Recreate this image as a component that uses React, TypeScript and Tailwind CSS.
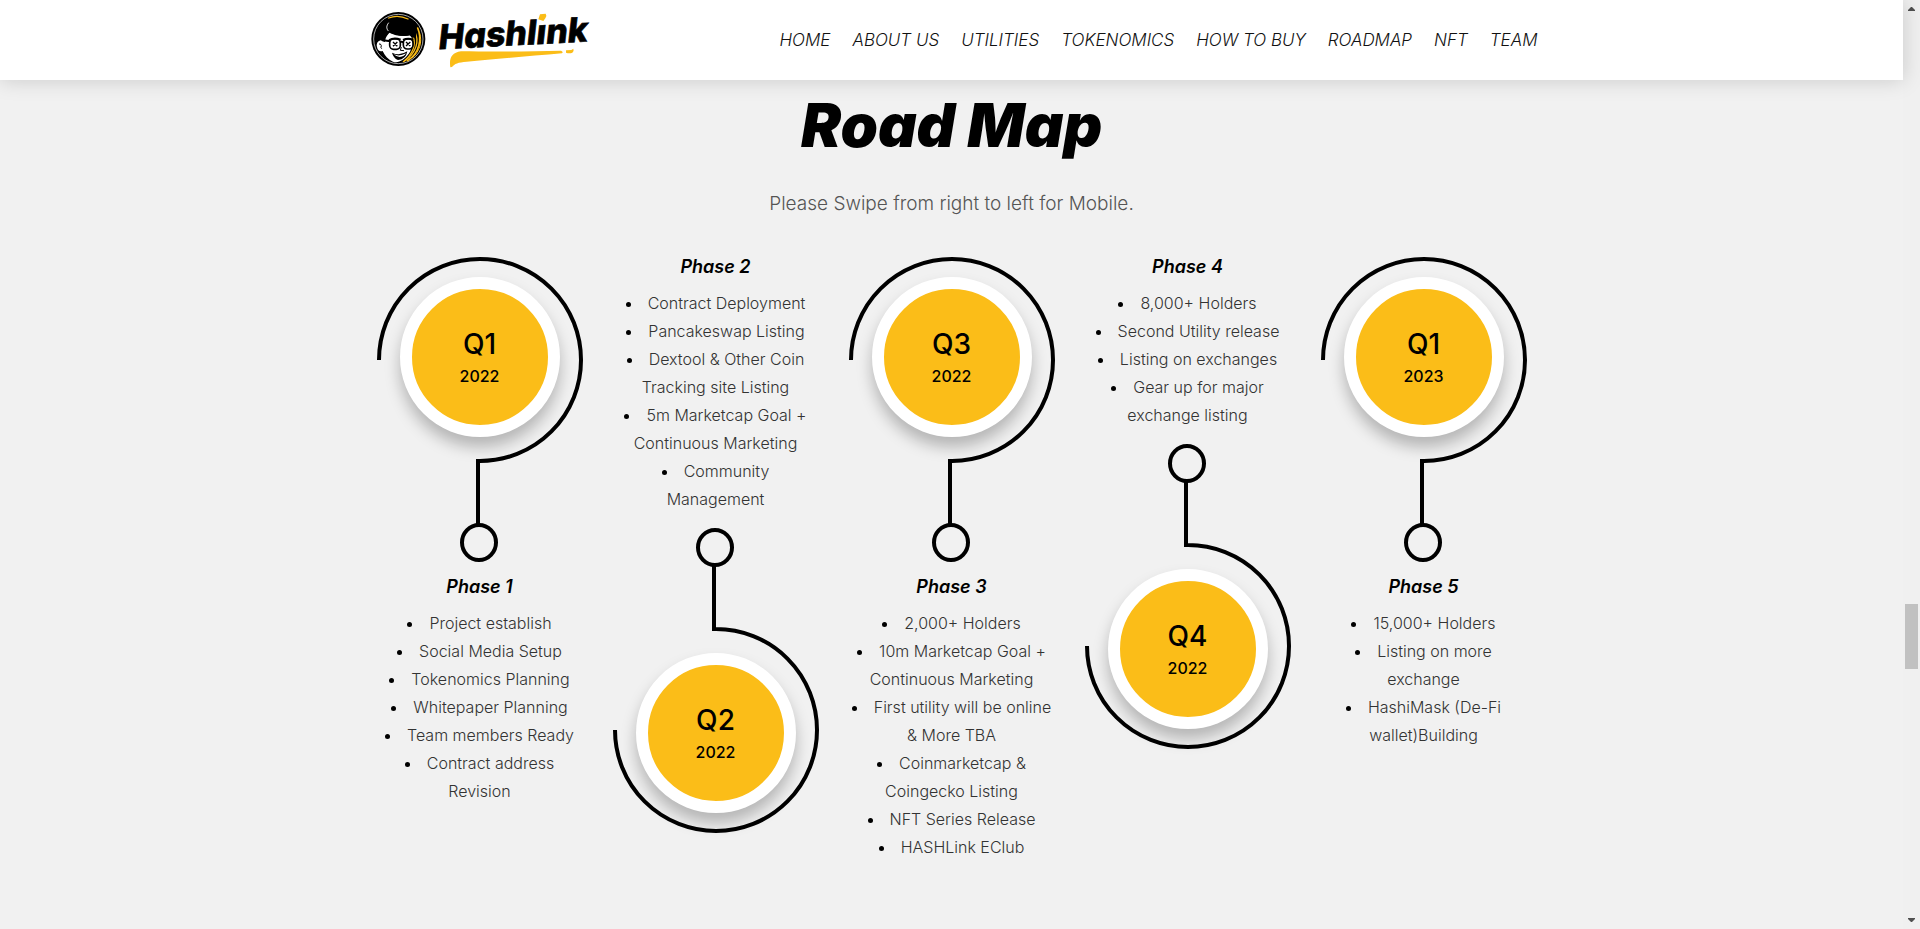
import React from "react";

type Phase = {
  title: string;
  quarter: string;
  year: string;
  items: string[][];
};

const navLinks = ["Home", "About us", "Utilities", "Tokenomics", "How to buy", "Roadmap", "NFT", "Team"];

const phases: Phase[] = [
  {
    title: "Phase 1",
    quarter: "Q1",
    year: "2022",
    items: [
      ["Project establish"],
      ["Social Media Setup"],
      ["Tokenomics Planning"],
      ["Whitepaper Planning"],
      ["Team members Ready"],
      ["Contract address", "Revision"],
    ],
  },
  {
    title: "Phase 2",
    quarter: "Q2",
    year: "2022",
    items: [
      ["Contract Deployment"],
      ["Pancakeswap Listing"],
      ["Dextool & Other Coin", "Tracking site Listing"],
      ["5m Marketcap Goal +", "Continuous Marketing"],
      ["Community", "Management"],
    ],
  },
  {
    title: "Phase 3",
    quarter: "Q3",
    year: "2022",
    items: [
      ["2,000+ Holders"],
      ["10m Marketcap Goal +", "Continuous Marketing"],
      ["First utility will be online", "& More TBA"],
      ["Coinmarketcap &", "Coingecko Listing"],
      ["NFT Series Release"],
      ["HASHLink EClub"],
    ],
  },
  {
    title: "Phase 4",
    quarter: "Q4",
    year: "2022",
    items: [
      ["8,000+ Holders"],
      ["Second Utility release"],
      ["Listing on exchanges"],
      ["Gear up for major", "exchange listing"],
    ],
  },
  {
    title: "Phase 5",
    quarter: "Q1",
    year: "2023",
    items: [["15,000+ Holders"], ["Listing on more", "exchange"], ["HashiMask (De-Fi", "wallet)Building"]],
  },
];

function Logo() {
  return (
    <svg viewBox="0 0 720 240" className="h-20 w-60" role="img" aria-label="Hashlink">
      <circle cx="109" cy="117" r="81" fill="#000" />
      <circle cx="109" cy="117" r="74" fill="none" stroke="#fff" strokeWidth="2" />
      <g transform="translate(-4 0)">
        <g fill="none" stroke="#fbbd18" strokeLinecap="round">
          <path d="M171 84C184 114 178 160 140 182" strokeWidth="5" />
          <path d="M163 96C176 122 168 158 132 183" strokeWidth="4" />
          <path d="M158 112C166 134 157 162 128 185" strokeWidth="4" />
          <path d="M177 100C186 126 176 154 156 173" strokeWidth="3" />
        </g>
        <path
          d="M64 121C53 121 46 129 49 141C51 152 58 156 66 153C72 167 82 178 97 185C113 191 130 180 143 163C151 152 155 138 155 116L148 106C128 112 101 105 86 97C78 106 72 113 70 123Z"
          fill="#fff"
        />
        <path
          d="M57 113C48 75 78 48 112 48C149 48 173 77 166 111C158 118 152 109 147 106C126 111 102 106 86 98C79 106 74 112 73 126L64 123Z"
          fill="#000"
        />
        <path d="M84 54Q112 43 142 57" fill="none" stroke="#fbbd18" strokeWidth="4" strokeLinecap="round" />
        <path d="M83 93Q73 82 84 68" fill="none" stroke="#fff" strokeWidth="2.5" />
        <g fill="#fff" stroke="#000" strokeWidth="5">
          <rect x="87" y="117" width="32" height="31" rx="12" />
          <rect x="128" y="117" width="29" height="30" rx="12" />
        </g>
        <path
          d="M63 120L89 124M118 127Q123 123 129 127M85 120Q101 111 120 119M127 120Q141 113 158 119"
          fill="none"
          stroke="#000"
          strokeWidth="6"
        />
        <path d="M97 126L110 139M110 126L97 139M136 126L149 138M149 126L136 138" stroke="#000" strokeWidth="4" />
        <path d="M122 141L119 151L130 152" fill="none" stroke="#000" strokeWidth="3" />
        <path d="M94 158Q117 169 140 154Q136 178 112 180Q98 174 94 158Z" fill="#000" />
        <path d="M99 163Q117 171 136 160Q132 169 117 171Q106 170 99 163Z" fill="#fff" />
        <path d="M55 132Q60 130 62 137Q59 143 63 146" fill="none" stroke="#000" strokeWidth="3" />
      </g>

      <text
        x="232"
        y="148"
        transform="rotate(-3 232 148)"
        fill="#000"
        stroke="#000"
        strokeWidth="2"
        fontFamily="Inter, sans-serif"
        fontStyle="italic"
        fontWeight="800"
        fontSize="102"
      >
        Hashlınk
      </text>
      <path d="M534 43L551 41Q556 48 550 55L544 63L529 58Z" fill="#fbbd18" />
      <path
        d="M265 202C261 176 268 158 297 154C390 155 501 155 597 152Q605 155 600 160C504 169 399 176 314 185C288 187 278 191 270 201Z"
        fill="#fbbd18"
      />
      <path d="M612 151L628 150L634 146Q637 153 631 158Q622 162 612 158Z" fill="#fbbd18" />
    </svg>
  );
}

function Connector({ flipped }: { flipped: boolean }) {
  return (
    <svg
      viewBox="0 0 206 305"
      className={flipped ? "col-start-1 row-start-1 w-[206px] -scale-y-100" : "col-start-1 row-start-1 w-[206px]"}
      fill="none"
      stroke="#000"
      strokeWidth="4"
      aria-hidden="true"
    >
      <path d="M2 103A101 101 0 1 1 103 204H101V267" />
      <ellipse cx="102" cy="285.5" rx="17" ry="17.5" />
    </svg>
  );
}

function Milestone({ phase, flipped }: { phase: Phase; flipped: boolean }) {
  return (
    <div className="grid justify-items-center">
      <Connector flipped={flipped} />
      <div
        className={
          flipped
            ? "col-start-1 row-start-1 mb-5 flex size-40 flex-col items-center justify-center self-end rounded-full border-12 border-white bg-[#fbbd18] pt-0.5 shadow-[0_10px_15px_rgba(0,0,0,0.25)]"
            : "col-start-1 row-start-1 mt-5 flex size-40 flex-col items-center justify-center self-start rounded-full border-12 border-white bg-[#fbbd18] pt-0.5 shadow-[0_10px_15px_rgba(0,0,0,0.25)]"
        }
      >
        <span className="text-[28px] leading-9 font-medium">{phase.quarter}</span>
        <span className="text-base leading-7 font-medium">{phase.year}</span>
      </div>
    </div>
  );
}

function Details({ phase }: { phase: Phase }) {
  return (
    <div className="text-center">
      <h3 className="mb-2 text-lg leading-7 font-semibold italic">{phase.title}</h3>
      <ul className="list-inside list-disc text-base leading-7 font-light text-[#333] marker:text-black">
        {phase.items.map((lines) => (
          <li key={lines[0]} className="whitespace-nowrap">
            {lines.map((line, i) => (
              <React.Fragment key={line}>
                {i > 0 && <br />}
                {line}
              </React.Fragment>
            ))}
          </li>
        ))}
      </ul>
    </div>
  );
}

function ScrollTrack() {
  return (
    <div className="sticky top-0 flex h-screen w-[17px] shrink-0 flex-col items-center bg-[#f0f0f0] py-[7px]" aria-hidden="true">
      <svg viewBox="0 0 7 4" className="h-1 w-[7px]" fill="#505050">
        <path d="M3 0h1l3 3v1H0V3z" />
      </svg>
      <div className="flex-593" />
      <div className="h-[65px] w-[13px] bg-[#c1c1c1]" />
      <div className="flex-249" />
      <svg viewBox="0 0 7 4" className="h-1 w-[7px]" fill="#505050">
        <path d="M0 0h7v1L4 4H3L0 1z" />
      </svg>
    </div>
  );
}

export default function App() {
  return (
    <div className="flex min-h-screen bg-[#f1f1f1] font-['Inter',sans-serif] text-black">
      <div className="min-w-0 flex-1">
        <header className="sticky top-0 z-10 bg-white shadow-[0_0_20px_rgba(0,0,0,0.17)]">
          <div className="mx-auto flex h-20 max-w-[1180px] items-center justify-between">
            <a href="#home">
              <Logo />
            </a>
            <nav className="flex gap-[22px] pr-1">
              {navLinks.map((label) => (
                <a key={label} href="#roadmap" className="text-[17px] leading-6 font-light text-[#111] uppercase italic">
                  {label}
                </a>
              ))}
            </nav>
          </div>
        </header>

        <main id="roadmap" className="mx-auto max-w-[1180px] pb-16">
          <h1 className="pt-2 text-center text-[60px] leading-[74px] font-black italic">Road Map</h1>
          <p className="mt-[26px] text-center text-[19px] leading-8 font-light text-[#555]">
            Please Swipe from right to left for Mobile.
          </p>
          <div className="mt-[33px] grid grid-cols-5 items-start">
            {phases.map((phase, i) =>
              i % 2 === 0 ? (
                <section key={phase.title} className="flex flex-col gap-[11px] pt-1">
                  <Milestone phase={phase} flipped={false} />
                  <Details phase={phase} />
                </section>
              ) : (
                <section key={phase.title} className="flex flex-col gap-[15px]">
                  <Details phase={phase} />
                  <Milestone phase={phase} flipped />
                </section>
              ),
            )}
          </div>
        </main>
      </div>
      <ScrollTrack />
    </div>
  );
}
